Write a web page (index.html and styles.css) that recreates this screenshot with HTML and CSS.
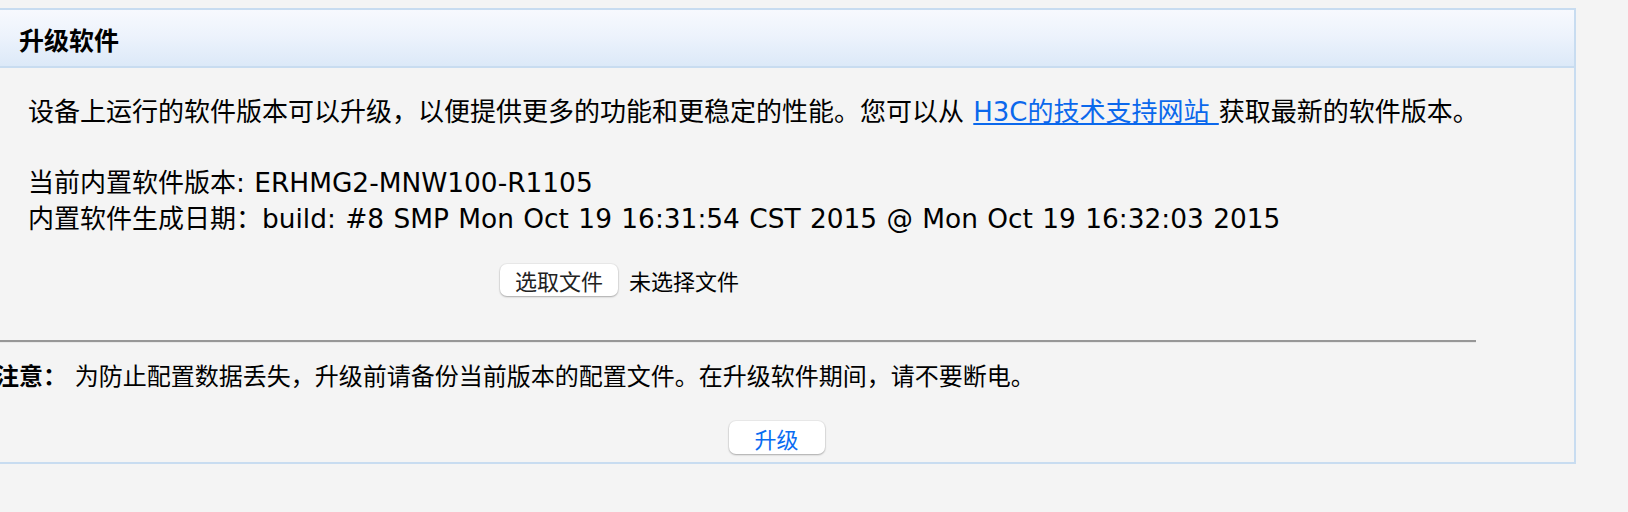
FILE: index.html
```html
<!DOCTYPE html>
<html lang="zh-CN">
<head>
<meta charset="utf-8">
<title>升级软件</title>
<link rel="stylesheet" href="styles.css">
</head>
<body>
<div class="panel">
  <div class="panel-head">升级软件</div>
  <div class="panel-body">
    <p class="intro">设备上运行的软件版本可以升级，以便提供更多的功能和更稳定的性能。您可以从 <a href="#">H3C的技术支持网站 </a>获取最新的软件版本。<br><br>当前内置软件版本<span class="en">: ERHMG2-MNW100-R1105</span><br>内置软件生成日期：<span class="en">build: #8 SMP Mon Oct 19 16:31:54 CST 2015 @ Mon Oct 19 16:32:03 2015</span></p>
    <div class="file-row"><span class="btn file-btn">选取文件</span><span class="file-name">未选择文件</span></div>
    <hr class="sep">
    <p class="note"><b>注意：</b> 为防止配置数据丢失，升级前请备份当前版本的配置文件。在升级软件期间，请不要断电。</p>
    <div class="actions"><button class="btn upgrade" type="button">升级</button></div>
  </div>
</div>
</body>
</html>
```
FILE: styles.css
```css
html, body {
  margin: 0;
  background: #f4f4f4;
}
body {
  padding-top: 8px;
  font-family: "DejaVu Sans", "Noto Sans CJK SC", sans-serif;
  color: #000;
  overflow: hidden;
}
.panel {
  margin-left: -23px;
  width: 1599px;
  box-sizing: border-box;
  border: 2px solid #c8dcf0;
}
.panel-head {
  height: 58px;
  box-sizing: border-box;
  padding: 2px 0 0 40px;
  border-bottom: 2px solid #c8dcf0;
  background: linear-gradient(#f7f9fe, #edf3fc 45%, #dce9f8);
  display: flex;
  align-items: center;
  font-family: "Noto Sans CJK SC", sans-serif;
  font-weight: bold;
  font-size: 25px;
}
.panel-body {
  padding: 27px 0 8px 0;
}
.intro {
  margin: 0;
  padding-left: 49px;
  font-size: 26px;
  line-height: 35px;
  word-spacing: 1px;
}
.intro .en {
  font-size: 26.4px;
}
.intro a {
  color: #0b68ec;
  text-decoration: underline;
}
.file-row {
  margin-top: 27px;
  padding-left: 521px;
  height: 32px;
  display: flex;
  align-items: center;
  gap: 11px;
  font-family: "Noto Sans CJK SC", sans-serif;
  font-size: 22px;
}
.btn {
  background: #fff;
  border-radius: 7px;
  box-shadow: 0 1px 2px rgba(0, 0, 0, 0.28), 0 0 0 1px rgba(0, 0, 0, 0.04);
}
.file-btn {
  width: 118px;
  height: 32px;
  display: flex;
  align-items: center;
  justify-content: center;
  color: #222;
}
.file-name {
  color: #000;
}
.sep {
  margin: 44px 98px 0 18px;
  height: 0;
  border: 0;
  border-top: 2px solid #979797;
  border-bottom: 1px solid #e8e8e8;
}
.note {
  margin: 15px 0 0 16px;
  font-size: 24px;
  line-height: 34px;
}
.note b {
  font-family: "Noto Sans CJK SC", sans-serif;
}
.actions {
  margin-top: 27px;
  display: flex;
  justify-content: center;
}
.upgrade {
  width: 96px;
  height: 33px;
  padding: 0;
  border: 0;
  font-family: "Noto Sans CJK SC", sans-serif;
  font-size: 22px;
  color: #0a6cf2;
}
```
